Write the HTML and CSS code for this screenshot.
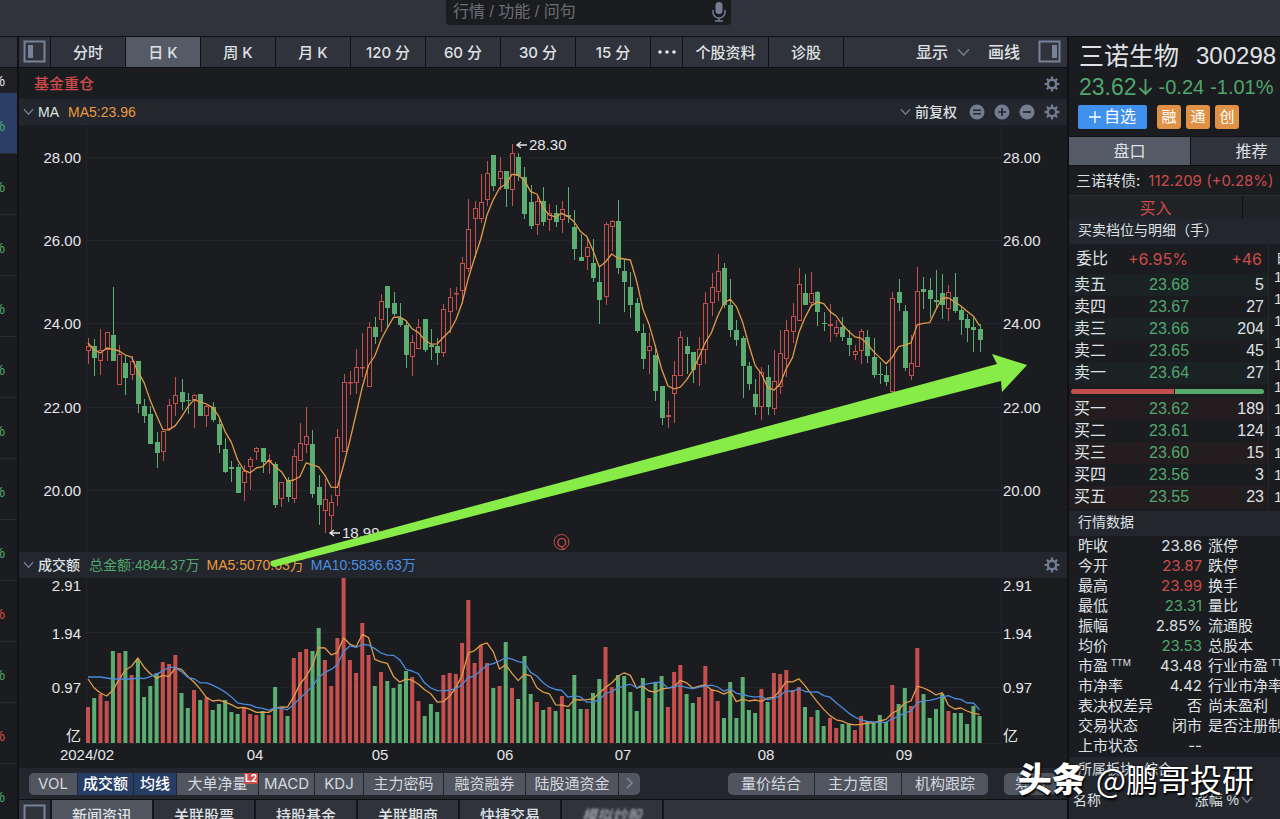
FILE: index.html
```html
<!DOCTYPE html>
<html lang="zh-CN">
<head>
<meta charset="utf-8">
<title>三诺生物 300298</title>
<link rel="stylesheet" href="styles.css">
</head>
<body>
<svg class="defs" aria-hidden="true">
  <defs>
    <symbol id="gear" viewBox="0 0 16 16"><circle cx="8" cy="8" r="4.2" fill="none" stroke="currentColor" stroke-width="2.4"/><path d="M8 .6v3M8 12.4v3M.6 8h3M12.4 8h3M2.8 2.8l2 2M11.2 11.2l2 2M13.2 2.8l-2 2M4.8 11.2l-2 2" stroke="currentColor" stroke-width="2.2"/></symbol>
    <symbol id="chev" viewBox="0 0 12 8"><path d="M1 1l5 5.5L11 1" fill="none" stroke="currentColor" stroke-width="1.4"/></symbol>
    <symbol id="eq" viewBox="0 0 16 16"><circle cx="8" cy="8" r="7.5" fill="currentColor"/><path d="M4 6.3h8M4 9.7h8" stroke="#23262d" stroke-width="1.5"/></symbol>
    <symbol id="plus" viewBox="0 0 16 16"><circle cx="8" cy="8" r="7.5" fill="currentColor"/><path d="M4 8h8M8 4v8" stroke="#23262d" stroke-width="1.7"/></symbol>
    <symbol id="minus" viewBox="0 0 16 16"><circle cx="8" cy="8" r="7.5" fill="currentColor"/><path d="M4 8h8" stroke="#23262d" stroke-width="1.7"/></symbol>
  </defs>
</svg>
<div class="app">
  <header class="topbar">
    <label class="search">
      <input type="search" placeholder="行情 / 功能 / 问句" aria-label="搜索">
      <svg class="mic" viewBox="0 0 14 20"><rect x="3.5" y="0" width="7" height="12" rx="3.5" fill="#737d94"/><path d="M1 8v2a6 6 0 0 0 12 0V8M7 16v3M3 19h8" fill="none" stroke="#737d94" stroke-width="1.5"/></svg>
    </label>
  </header>
  <div class="body">
    <aside class="strip">
      <div class="strip-top"></div>
      <div class="strip-head">%</div>
      <div class="strip-row on">%</div><div class="strip-row">%</div><div class="strip-row">%</div><div class="strip-row">%</div><div class="strip-row">%</div><div class="strip-row">%</div><div class="strip-row">%</div><div class="strip-row">%</div><div class="strip-row up">%</div><div class="strip-row">%</div><div class="strip-row up">%</div><div class="strip-row">%</div>
    </aside>
    <main class="main">
      <nav class="toolbar">
        <button class="tool icon" aria-label="左侧栏"><svg width="24" height="24" viewBox="0 0 24 24"><rect x="1.5" y="1.5" width="20" height="20" fill="none" stroke="#76839a" stroke-width="2"/><rect x="5" y="5" width="5" height="13" fill="#76839a"/></svg></button>
        <button class="tool">分时</button><button class="tool on">日 K</button><button class="tool">周 K</button><button class="tool">月 K</button><button class="tool">120 分</button><button class="tool">60 分</button><button class="tool">30 分</button><button class="tool">15 分</button>
        <button class="tool icon" aria-label="更多"><svg width="20" height="6" viewBox="0 0 20 6"><g fill="#e4e6ea"><circle cx="3" cy="3" r="1.8"/><circle cx="10" cy="3" r="1.8"/><circle cx="17" cy="3" r="1.8"/></g></svg></button>
        <button class="tool wide">个股资料</button><button class="tool">诊股</button>
        <div class="tool-end">
          <button class="plain">显示<svg class="chev" width="13" height="9"><use href="#chev"/></svg></button>
          <button class="plain">画线</button>
          <button class="plain" aria-label="右侧栏"><svg width="24" height="24" viewBox="0 0 24 24"><rect x="1.5" y="1.5" width="20" height="20" fill="none" stroke="#76839a" stroke-width="2"/><rect x="14" y="5" width="5" height="13" fill="#76839a"/></svg></button>
        </div>
      </nav>
      <div class="tagrow"><span class="tag">基金重仓</span><svg class="ico" width="16" height="16"><use href="#gear"/></svg></div>
      <div class="sub">
        <svg class="chev" width="11" height="8"><use href="#chev"/></svg><b>MA</b><span class="orange">MA5:23.96</span>
        <div class="sub-end"><svg class="chev" width="11" height="8"><use href="#chev"/></svg><span class="adj">前复权</span>
          <svg class="ico" width="16" height="16"><use href="#eq"/></svg><svg class="ico" width="16" height="16"><use href="#plus"/></svg><svg class="ico" width="16" height="16"><use href="#minus"/></svg><svg class="ico" width="16" height="16"><use href="#gear"/></svg></div>
      </div>
      <div class="charts">
        <svg id="price" class="chart" viewBox="19 125 1048 427"></svg>
        <div class="sub">
          <svg class="chev" width="11" height="8"><use href="#chev"/></svg><b>成交额</b><span class="green">总金额:4844.37万</span><span class="orange">MA5:5070.63万</span><span class="blue">MA10:5836.63万</span>
          <div class="sub-end"><svg class="ico" width="16" height="16"><use href="#gear"/></svg></div>
        </div>
        <svg id="volume" class="chart" viewBox="19 578 1048 190"></svg>
        <svg class="trend" viewBox="19 125 1048 643"><path d="M271 561L997 364L992 354L1027 365L1002 392L1001 381L274 567Q269 566 271 561Z" fill="#88ec48"/></svg>
      </div>
      <div class="indicators">
        <div class="group"><button class="w48">VOL</button><button class="w55 on">成交额</button><button class="w42 on">均线</button><button class="w81">大单净量<sup>L2</sup></button><button class="w55">MACD</button><button class="w48">KDJ</button><button class="w79">主力密码</button><button class="w81">融资融券</button><button class="w92">陆股通资金</button><button class="w21" aria-label="更多指标"><svg width="8" height="12" viewBox="0 0 8 12"><path d="M1 1l5 5-5 5" fill="none" stroke="#7f8899" stroke-width="1.5"/></svg></button></div>
        <div class="group right"><button class="w86">量价结合</button><button class="w86">主力意图</button><button class="w86">机构跟踪</button></div>
        <div class="group last"><button class="w52">筹码</button></div>
      </div>
      <nav class="tabs">
        <button class="tab fold" aria-label="展开"><svg width="24" height="24" viewBox="0 0 24 24"><rect x="1.5" y="1.5" width="20" height="20" fill="none" stroke="#76839a" stroke-width="2"/><path d="M5 15h13v3H5z" fill="#76839a"/></svg></button>
        <button class="tab on">新闻资讯</button><button class="tab">关联股票</button><button class="tab">持股基金</button><button class="tab">关联期商</button><button class="tab">快捷交易</button><button class="tab"><span class="smudge">模拟炒股</span></button>
      </nav>
    </main>
    <aside class="quote">
      <div class="name"><h1>三诺生物</h1><span>300298</span></div>
      <div class="last"><span class="now">23.62</span><svg width="15" height="18" viewBox="0 0 15 18"><path d="M7.500 1v15M1.500 10l6 6 6-6" fill="none" stroke="#4fa66c" stroke-width="1.8"/></svg><span>-0.24</span><span>-1.01%</span></div>
      <div class="badges"><button class="add"><svg width="12" height="12" viewBox="0 0 12 12"><path d="M0 6h12M6 0v12" stroke="#fff" stroke-width="1.4"/></svg>自选</button><span class="badge">融</span><span class="badge">通</span><span class="badge">创</span></div>
      <div class="qtabs"><button class="on">盘口</button><button>推荐</button></div>
      <div class="bond"><span>三诺转债:</span><span class="red">112.209 (+0.28%)</span></div>
      <div class="trade"><button>买入</button><button aria-label="卖出"></button></div>
      <h2>买卖档位与明细（手）</h2>
      <div class="book">
        <div class="levels">
          <div class="ratio"><span>委比</span><span class="red">+6.95%</span><span class="red">+46</span></div>
          <table class="sell"><tr><th>卖五</th><td>23.68</td><td>5</td></tr><tr><th>卖四</th><td>23.67</td><td>27</td></tr><tr><th>卖三</th><td>23.66</td><td>204</td></tr><tr><th>卖二</th><td>23.65</td><td>45</td></tr><tr><th>卖一</th><td>23.64</td><td>27</td></tr></table>
          <div class="balance"><i class="b"></i><i class="s"></i></div>
          <table class="buy"><tr><th>买一</th><td>23.62</td><td>189</td></tr><tr><th>买二</th><td>23.61</td><td>124</td></tr><tr><th>买三</th><td>23.60</td><td>15</td></tr><tr><th>买四</th><td>23.56</td><td>3</td></tr><tr><th>买五</th><td>23.55</td><td>23</td></tr></table>
        </div>
        <div class="ticks"><b>时</b><span>1</span><span>1</span><span>1</span><span>1</span><span>1</span><span>1</span><span>1</span><span>1</span><span>1</span><span>1</span><span>1</span></div>
      </div>
      <h2>行情数据</h2>
      <table class="data">
        <tr><th>昨收</th><td>23.86</td><th>涨停</th></tr>
        <tr><th>今开</th><td class="red">23.87</td><th>跌停</th></tr>
        <tr><th>最高</th><td class="red">23.99</td><th>换手</th></tr>
        <tr><th>最低</th><td class="green">23.31</td><th>量比</th></tr>
        <tr><th>振幅</th><td>2.85%</td><th>流通股</th></tr>
        <tr><th>均价</th><td class="green">23.53</td><th>总股本</th></tr>
        <tr><th>市盈<small>TTM</small></th><td>43.48</td><th>行业市盈<small>TTM</small></th></tr>
        <tr><th>市净率</th><td>4.42</td><th>行业市净率</th></tr>
        <tr><th>表决权差异</th><td>否</td><th>尚未盈利</th></tr>
        <tr><th>交易状态</th><td>闭市</td><th>是否注册制</th></tr>
        <tr><th>上市状态</th><td>--</td><th></th></tr>
      </table>
      <div class="sector"><div class="sector-title"><span>所属板块</span><span>综合</span></div><div class="sector-head"><span>名称</span><span class="pct">涨幅 %<svg class="chev" width="12" height="8"><use href="#chev"/></svg></span></div></div>
    </aside>
  </div>
  <div class="watermark"><strong>头条</strong><span>@鹏哥投研</span></div>
</div>
<script src="charts.js"></script>
</body>
</html>
```

FILE: styles.css
```css
* { box-sizing: border-box; }
body { margin: 0; background: #1b1c1f; color: #dfe1e5; font: 15px/20px "Liberation Sans", "Noto Sans CJK SC", sans-serif; }
button { border: 0; margin: 0; padding: 0; background: none; color: inherit; font: inherit; white-space: nowrap; }
.defs { position: absolute; width: 0; height: 0; }
.app { position: relative; height: 100vh; overflow: hidden; display: flex; flex-direction: column; }
.red, .up { color: #cc4b4b; }
.green { color: #4fa66c; }
.orange { color: #eb9a3c; }
.blue { color: #4b8fe2; }
.chev { color: #737d90; }
.ico { color: #737d90; }

.topbar { flex: 0 0 36px; background: #30333b; display: flex; justify-content: center; align-items: flex-start; }
.search { width: 285px; height: 25px; margin-right: 103px; padding: 0 5px 2px 7px; background: #1b1c20; border-radius: 0 0 4px 4px; display: flex; align-items: center; }
.search input { flex: 1; min-width: 0; padding: 0; border: 0; outline: 0; background: none; font: inherit; font-size: 16px; color: #ddd; }
.search input::placeholder { color: #6c6e74; opacity: 1; }
.mic { width: 14px; height: 20px; }

.body { flex: 1; min-height: 0; display: flex; border-top: 1px solid #0e0f11; }
.strip { flex: 0 0 19px; border-right: 2px solid #101114; font-size: 15px; display: flex; flex-direction: column; overflow: hidden; color: #4fa66c; }
.strip > div { flex: none; display: flex; align-items: center; justify-content: flex-end; padding-right: 12px; }
.strip-top { height: 31px; background: #30333b; border-bottom: 1px solid #0e0f11; }
.strip-head { height: 25px; background: #1f2024; color: #dfe1e5; }
.strip-row { height: 61px; padding-top: 5px; border-bottom: 1px solid #282a2f; }
.strip-row.on { background: #2b3f66; }
.strip-row.up { color: #cc4b4b; }

.main { flex: 1; min-width: 0; display: flex; flex-direction: column; }
.main > * { flex: none; }
.toolbar { height: 31px; background: #30333b; border-bottom: 1px solid #0e0f11; display: flex; font-family: Inter, "Noto Sans CJK SC", sans-serif; font-weight: 500; }
.tool { flex: 0 1 75px; padding-top: 2px; border-right: 1px solid #101114; }
.tool.icon { flex: 0 0 32px; padding: 0; display: grid; place-items: center; }
.tool.wide { flex-basis: 86px; }
.tool.on { background: #545a66; }
.tool-end { margin-left: auto; padding-right: 5px; display: flex; align-items: center; gap: 18px; font-size: 16px; }
.tool-end .plain { display: flex; align-items: center; gap: 9px; }
.tagrow { height: 31px; padding: 0 7px 0 15px; display: flex; align-items: center; justify-content: space-between; color: #cc4b4b; }
.tagrow .tag { font-weight: 500; }
.sub { height: 26px; padding: 0 7px 0 4px; background: #23262d; display: flex; align-items: center; gap: 7px; font-size: 14px; }
.sub .chev + b { margin-left: -3px; margin-right: 2px; }
.sub b { font-weight: 500; }
.sub-end { margin-left: auto; display: flex; align-items: center; gap: 9px; }
.sub-end .adj { margin-left: -5px; margin-right: 3px; font-weight: 500; }
.charts { position: relative; }
.chart { display: block; width: 100%; height: auto; }
.chart text { fill: #e4e6ea; font: 15px "Liberation Sans", "Noto Sans CJK SC", sans-serif; }
.trend { position: absolute; inset: 0; width: 100%; height: 100%; pointer-events: none; }

.indicators { height: 31px; padding: 5px 11px 4px 10px; background: #23262d; display: flex; font-family: Inter, "Noto Sans CJK SC", sans-serif; }
.group { display: flex; gap: 1px; border-radius: 5px; overflow: hidden; }
.group button { position: relative; height: 22px; background: #505560; color: #d5d8de; }
.group button.on { background: #263d66; color: #fff; font-weight: 500; }
.group.right { margin-left: auto; }
.group.last { margin-left: 16px; }
.group sup { position: absolute; top: 0; right: 0; padding: 0 1px; background: #cc4b4b; color: #fff; font-size: 10px; line-height: 11px; font-weight: 700; }
.w21 { width: 21px; } .w42 { width: 42px; } .w48 { width: 48px; } .w52 { width: 52px; } .w55 { width: 55px; }
.w79 { width: 79px; } .w81 { width: 81px; } .w86 { width: 86px; } .w92 { width: 92px; }
.tabs { height: 32px; background: #30333b; border-top: 1px solid #0e0f11; display: flex; }
.tab { flex: 0 1 102px; border-right: 2px solid #15161a; font-weight: 500; }
.tab.fold { flex: 0 0 33px; display: grid; place-items: center; }
.tab.on { background: #505560; }
.smudge { font-style: italic; color: #a9acb2; filter: blur(1px); }

.quote { flex: 0 0 213px; border-left: 2px solid #101114; overflow: hidden; white-space: nowrap; }
.quote h1 { margin: 0; font-size: 25px; line-height: 36px; font-weight: 400; }
.name { height: 37px; padding-left: 10px; display: flex; align-items: center; gap: 17px; font-size: 24px; }
.quote .last { height: 26px; padding-left: 10px; display: flex; align-items: center; gap: 6px; font-size: 20px; color: #4fa66c; }
.quote .last .now { font-size: 23px; margin-right: -5px; }
.badges { height: 36px; padding: 5px 0 6px 9px; display: flex; gap: 5px; }
.add { width: 69px; height: 24px; margin-right: 5px; background: #4090ee; color: #fff; border-radius: 2px; font-size: 16px; display: flex; align-items: center; justify-content: center; gap: 3px; }
.badge { width: 24px; height: 24px; background: #df9245; color: #fff; border-radius: 3px; text-align: center; line-height: 23px; }
.qtabs { height: 30px; display: flex; background: #30333b; border-top: 1px solid #0e0f11; border-bottom: 1px solid #0e0f11; font-size: 16px; }
.qtabs button { flex: 0 0 122px; padding-top: 2px; border-right: 1px solid #0e0f11; }
.qtabs .on { background: #545a66; }
.bond { height: 29px; padding-left: 7px; display: flex; align-items: center; gap: 8px; font-family: Inter, "Noto Sans CJK SC", sans-serif; font-size: 15px; }
.trade { height: 24px; display: flex; background: #202226; border-top: 1px solid #2a2c31; font-size: 16px; color: #cc4b4b; }
.trade button { flex: 0 0 174px; padding-top: 2px; border-right: 1px solid #101114; }
.quote h2 { margin: 0; height: 25px; padding-left: 9px; background: #23262d; font-size: 14px; line-height: 23px; font-weight: 400; }
.book { display: flex; height: 267px; }
.levels { flex: 0 0 200px; border-right: 1px solid #25272c; font-size: 16px; }
.ratio { height: 30px; padding: 0 6px 0 7px; display: flex; align-items: center; }
.ratio .red { font-family: Inter, sans-serif; }
.ratio span:nth-child(2) { margin-left: 20px; }
.ratio span:last-child { margin-left: auto; }
table { border-collapse: collapse; }
th { font-weight: 400; text-align: left; }
td, th { padding: 0; }
.levels table { width: 100%; }
.levels tr { height: 22px; }
.levels th { padding-left: 5px; width: 80px; line-height: 22px; }
.levels td { line-height: 22px; }
.levels td:nth-child(2) { color: #4fa66c; }
.levels td:last-child { padding-right: 4px; text-align: right; }
.sell tr:nth-child(odd) { background: #1b2224; }
.buy tr:nth-child(odd) { background: #231d20; }
.balance { height: 14px; padding: 5px 4px 4px 2px; display: flex; gap: 1px; }
.balance i { height: 5px; }
.balance .b { flex: 53; background: #c04f4b; border-radius: 3px 0 0 3px; }
.balance .s { flex: 46; background: #57a96c; border-radius: 0 3px 3px 0; }
.ticks { padding: 7px 0 0 5px; width: 12px; overflow: hidden; display: flex; flex-direction: column; }
.ticks b { font-weight: 400; padding-left: 3px; line-height: 15px; }
.ticks span { line-height: 22px; }
.data { margin: 0 0 1px 9px; font-family: Inter, "Noto Sans CJK SC", sans-serif; font-size: 15px; }
.data th, .data td { height: 20px; line-height: 20px; }
.data td { text-align: right; padding-right: 6px; min-width: 55px; }
.data th:first-child { width: 76px; }
.data small { font-size: 9px; line-height: 9px; vertical-align: 5px; margin-left: 3px; }
.sector { background: #23262d; height: 70px; font-size: 14px; }
.sector-title { height: 24px; padding-left: 9px; display: flex; align-items: center; gap: 10px; }
.sector-head { height: 33px; padding: 4px 27px 0 4px; display: flex; align-items: center; justify-content: space-between; }
.pct { display: flex; align-items: center; gap: 2px; }

.watermark { position: absolute; right: 26px; bottom: 20px; display: flex; align-items: center; gap: 10px; color: #fff; font-family: "Noto Sans CJK SC", sans-serif; font-size: 32px; line-height: 42px; text-shadow: 1px 2px 2px #000, 0 0 2px #000; }
.watermark strong { font-size: 34px; font-weight: 900; }
```

FILE: charts.js
```js
// One row per day: direction, high, body top, body bottom, low, turnover bar top (chart units)
const days = `
R 338 346 351 364 707|G 339 346 358 376 698|R 329 350 361 375 694|R 332 332 350 361 701|G 287 335 361 361 651
R 345 354 385 385 653|G 355 363 378 395 651|R 356 361 375 380 675|G 361 361 404 413 660|G 399 406 416 423 697
G 406 414 444 444 686|G 432 442 453 468 673|R 431 431 452 461 662|R 399 405 429 431 664|R 377 395 404 416 655
G 379 392 402 410 693|G 393 400 401 414 708|R 394 395 400 428 690|G 394 394 416 416 700|R 405 406 416 427 697
G 402 407 420 422 710|G 417 424 445 453 704|G 438 449 472 473 700|G 461 467 469 482 712|G 464 467 493 493 714
R 465 471 483 501 707|R 457 459 467 490 714|R 447 448 452 460 715|G 448 448 462 473 711|R 454 460 461 474 715
G 462 464 505 508 687|R 482 482 499 507 707|G 477 480 497 502 716|R 449 456 499 503 658|R 423 443 461 461 652
R 407 436 445 453 649|G 430 444 494 498 651|G 475 487 505 525 628|R 479 499 511 533 660|R 495 502 516 533 686
R 429 437 496 506 638|R 374 382 452 452 577|R 371 382 383 395 660|R 349 367 383 394 673|R 333 367 368 377 623
R 322 327 387 387 655|G 317 327 337 344 686|R 294 301 320 332 672|G 286 286 308 327 681|G 292 303 314 316 688
G 303 318 325 327 684|G 321 325 355 368 671|R 335 342 357 376 677|R 319 327 349 349 701|G 319 319 350 352 716
G 329 345 347 360 704|G 338 346 353 365 712|R 304 309 353 357 675|R 288 297 312 333 673|R 287 293 294 310 674
R 257 263 291 304 643|R 199 229 269 272 600|R 201 208 219 258 663|R 174 202 219 223 645|R 161 173 200 206 663
G 155 155 186 191 688|R 157 171 179 190 686|G 171 171 189 207 642|R 144 153 190 206 688|G 153 157 176 181 699
G 167 177 214 219 656|G 185 202 226 229 694|R 195 201 225 235 702|G 187 201 222 226 710|R 204 213 220 231 707
G 205 213 222 227 711|R 201 209 220 233 696|G 187 215 217 223 709|G 210 227 249 260 675|G 234 257 261 261 709
R 237 247 257 270 709|G 239 263 278 282 693|G 267 282 300 324 679|R 222 224 297 305 647|R 220 221 227 251 687
G 200 221 268 274 675|G 259 271 282 312 676|G 272 287 305 318 692|G 298 303 331 333 711|G 324 333 359 369 678
R 333 346 351 374 698|G 345 355 391 401 682|G 386 386 418 425 676|R 401 415 417 428 707|R 361 375 394 423 672
R 331 337 376 376 665|G 337 346 354 374 694|G 352 352 370 383 703|R 337 349 365 386 697|R 292 303 350 364 666
R 273 287 303 316 689|R 254 271 292 301 701|G 263 268 305 308 718|G 279 305 330 337 682|G 320 330 340 346 718
G 336 338 366 398 677|G 362 366 384 390 710|G 379 394 407 415 713|R 367 372 407 420 689|G 365 377 407 415 702
R 350 381 409 415 673|R 330 353 387 394 674|R 320 330 359 377 670|R 303 316 332 343 690|R 268 284 321 321 687
G 274 293 305 305 707|R 272 293 303 306 717|G 291 292 312 326 710|G 312 323 324 331 726|R 304 324 326 342 718
R 320 327 334 337 728|G 317 327 337 341 724|G 330 338 345 356 724|R 345 351 355 360 730|R 329 331 351 364 716
G 330 337 356 363 721|G 338 357 375 378 723|G 362 374 375 384 715|G 366 375 382 386 722|R 292 298 392 392 685
G 279 292 303 311 704|G 305 311 368 371 688|R 335 363 376 380 706|R 267 291 367 367 648|G 277 289 292 309 694
G 278 290 299 318 718|G 270 300 302 309 709|G 274 293 305 319 694|R 285 292 309 321 711|G 273 297 311 313 713
G 306 310 320 335 713|G 314 319 328 342 724|G 318 327 330 352 706|G 324 329 340 352 716`
  .trim().split(/[|\n]/).map(r => {
    const [dir, ...n] = r.split(' ');
    const [high, top, bottom, low, vol] = n.map(Number);
    return { up: dir === 'R', high, top, bottom, low, vol };
  });

const RED = '#c44f4d', GREEN = '#5cad72', ORANGE = '#e09c48', BLUE = '#4b8bdc', GRID = '#222428';
const x = i => 88 + i * 6.235;
const line = (x1, y1, x2, y2, c) => `<path d="M${x1} ${y1}L${x2} ${y2}" stroke="${c}" fill="none"/>`;
const text = (tx, y, s, anchor = 'start') => `<text x="${tx}" y="${y}" text-anchor="${anchor}">${s}</text>`;

// Moving average; `seed` supplies the points that precede a full window
function average(values, n, seed, color) {
  const pts = values.map((v, i) => {
    const y = i < n - 1 ? seed[i] : values.slice(i - n + 1, i + 1).reduce((a, b) => a + b) / n;
    return `${x(i).toFixed(1)},${y.toFixed(1)}`;
  });
  return `<polyline points="${pts.join(' ')}" fill="none" stroke="${color}" stroke-width="1.3" stroke-linejoin="round"/>`;
}

let p = line(86.5, 125, 86.5, 552, GRID) + line(1001.5, 125, 1001.5, 552, GRID);
[[28, 157], [26, 240], [24, 323], [22, 407], [20, 490]].forEach(([v, y]) => {
  p += line(86, y + .5, 1001, y + .5, GRID) + text(81, y + 6, v + '.00', 'end') + text(1003, y + 6, v + '.00');
});
days.forEach((d, i) => {
  const cx = Math.round(x(i)), c = d.up ? RED : GREEN;
  if (d.up) {
    p += line(cx + .5, d.high, cx + .5, d.top, c) + line(cx + .5, d.bottom, cx + .5, d.low, c);
    p += `<rect x="${cx - 1.5}" y="${d.top + .5}" width="4" height="${Math.max(d.bottom - d.top - 1, 0.5)}" fill="none" stroke="${c}"/>`;
  } else {
    p += line(cx + .5, d.high, cx + .5, d.low, c);
    p += `<rect x="${cx - 2}" y="${d.top}" width="5" height="${d.bottom - d.top}" fill="${c}"/>`;
  }
});
p += average(days.map(d => d.up ? d.top : d.bottom), 5, [343, 350, 353, 348], ORANGE);
const arrow = (ax, y) => `<path d="M${ax + 11} ${y}H${ax + 1}M${ax + 5} ${y - 3}L${ax + 1} ${y}L${ax + 5} ${y + 3}" fill="none" stroke="#e4e6ea" stroke-width="1.4"/>`;
p += arrow(516, 145) + text(529, 150, '28.30') + arrow(329, 533) + text(342, 538, '18.99');
p += `<circle cx="561.500" cy="542" r="7.500" fill="none" stroke="${RED}"/><text x="561.500" y="547" text-anchor="middle" style="fill:${RED};font-size:13px">Q</text>`;
document.getElementById('price').innerHTML = p;

let v = line(86.5, 578, 86.5, 743, GRID) + line(1001.5, 578, 1001.5, 743, GRID);
[632, 687, 743].forEach(y => { v += line(86, y + .5, 1001, y + .5, GRID); });
[['2.91', 591], ['1.94', 639], ['0.97', 693], ['亿', 741]].forEach(([s, y]) => {
  v += text(81, y, s, 'end') + text(1003, y, s);
});
days.forEach((d, i) => {
  v += `<rect x="${(x(i) - 2).toFixed(1)}" y="${d.vol}" width="4" height="${743 - d.vol}" fill="${d.up ? RED : GREEN}"/>`;
});
const vols = days.map(d => d.vol);
v += average(vols, 5, [679, 688, 693, 696], ORANGE);
v += average(vols, 10, [677, 677, 677, 678, 679, 679, 679, 679, 678], BLUE);
[['2024/02', 87], ['04', 255], ['05', 380], ['06', 505], ['07', 623], ['08', 766], ['09', 904]].forEach(([s, tx]) => {
  v += text(tx, 760, s, 'middle');
});
document.getElementById('volume').innerHTML = v;
```
